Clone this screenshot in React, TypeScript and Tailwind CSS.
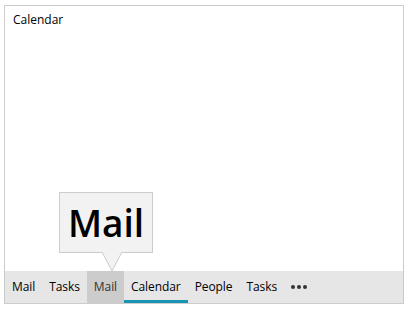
import React from "react";

const items = ["Mail", "Tasks", "Mail", "Calendar", "People", "Tasks"];

export default function App() {
  return (
    <div className="w-[411px] h-[313px] bg-white pt-[5px] pl-[4px]" style={{ fontFamily: '"Open Sans", "Noto Sans", sans-serif' }}>
      <div className="relative w-[400px] h-[299px] border border-[#cccccc] flex flex-col">
        <div className="flex-1 px-[8px] pt-[5px] text-[12px] text-black">Calendar</div>

        {/* Tooltip */}
        <div className="absolute left-[54px] top-[186px] w-[94px] h-[61px] bg-[#f2f2f2] border border-[#cccccc] flex items-center justify-center">
          <span className="text-[37px] font-semibold text-black leading-none">Mail</span>
          <svg className="absolute left-[41px] top-[59px]" width="22" height="20" viewBox="0 0 22 20">
            <polygon points="1,0 21,0 11,19" fill="#f2f2f2" />
            <polyline points="1,0 11,19 21,0" fill="none" stroke="#cccccc" strokeWidth="1" />
          </svg>
        </div>

        {/* Nav bar */}
        <div className="h-[32px] bg-[#e6e6e6] flex items-stretch text-[12px] tracking-[-0.08px] text-black">
          {items.map((label, i) => (
            <div
              key={i}
              className={
                i === 2
                  ? "px-[7px] flex items-center bg-[#cccccc] text-[#333333]"
                  : i === 3
                  ? "px-[7px] flex items-center border-b-[3px] border-[#1a94b5] pt-[3px]"
                  : "px-[7px] flex items-center"
              }
            >
              {label}
            </div>
          ))}
          <div className="px-[7px] flex items-center gap-[2px]">
            <span className="w-[4px] h-[4px] rounded-full bg-[#333333]" />
            <span className="w-[4px] h-[4px] rounded-full bg-[#333333]" />
            <span className="w-[4px] h-[4px] rounded-full bg-[#333333]" />
          </div>
        </div>
      </div>
    </div>
  );
}
